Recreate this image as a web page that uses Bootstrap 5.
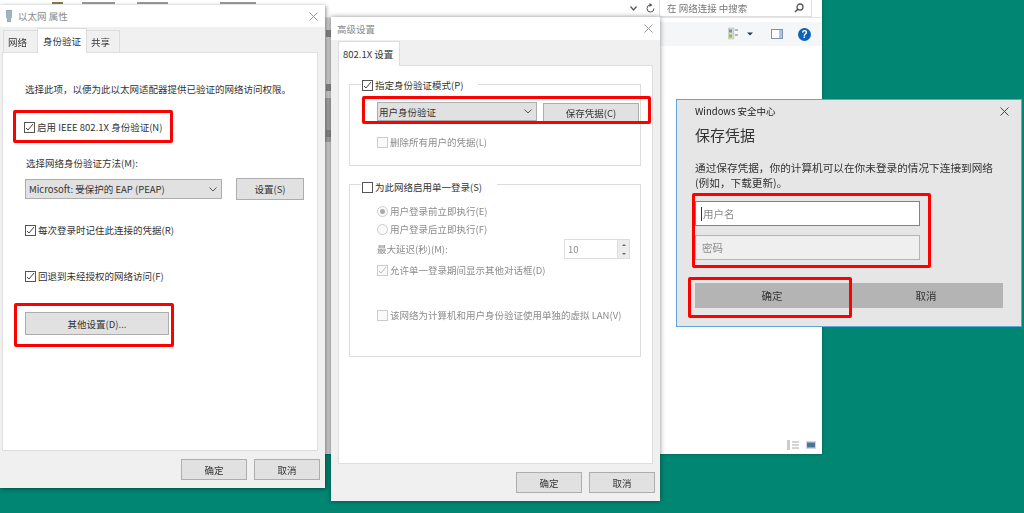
<!DOCTYPE html>
<html lang="zh">
<head>
<meta charset="utf-8">
<title>以太网 属性</title>
<link href="https://cdn.jsdelivr.net/npm/bootstrap@5.3.0/dist/css/bootstrap.min.css" rel="stylesheet">
<style>
html,body{margin:0;height:513px;overflow:hidden}
body{background:#008673;font:9.5px/14px "Noto Sans CJK SC","Liberation Sans",sans-serif;color:#333;position:relative}
.win{position:absolute;background:#f0f0f0;display:flex;flex-direction:column;filter:blur(.35px)}
.dlg-a{left:0;top:5px;width:325px;height:483px;box-shadow:1px 1px 4px rgba(0,0,0,.45)}
.dlg-b{left:331px;top:17px;width:329px;height:484px;box-shadow:0 0 5px rgba(0,0,0,.45)}
.explorer{left:0;top:0;width:822px;height:454px;background:#fff;box-shadow:0 0 3px rgba(0,0,0,.3)}
.titlebar{height:22px;background:#fff;display:flex;align-items:center;color:#8a8a8a;flex:none}
.closex{margin-left:auto;margin-right:7px}
.tabrow{display:flex;align-items:flex-end;height:25px;flex:none}
.wintab{height:22px;padding:0 4px;border:1px solid #dcdcdc;border-bottom:0;background:#f0f0f0;display:flex;align-items:center;color:#333}
.wintab.on{height:25px;background:#fff;position:relative;z-index:1;padding:0 6px;margin-bottom:-1px}
.panel{background:#fff;border:1px solid #dedede;flex:1;position:relative}
.foot{height:37px;display:flex;justify-content:flex-end;align-items:center;gap:7px;flex:none}
.winbtn{background:#e1e1e1;border:1px solid #adadad;display:flex;align-items:center;justify-content:center;color:#333}
.foot .winbtn{width:66px;height:21px}
.rowline{display:flex;align-items:center;gap:2px;white-space:nowrap}
.box{width:11px;height:11px;border:1px solid #555;background:#fff;flex:none;display:flex;align-items:center;justify-content:center}
.box svg{display:block}
.dis{color:#8c8c8c}
.dis .box{border-color:#ccc;background:#fafafa}
.dd{background:#e1e1e1;border:1px solid #adadad;display:flex;align-items:center;padding-left:3px;justify-content:space-between;padding-right:4px;color:#333}
.dd-tight{padding-left:1px}
.red{position:absolute;border:3px solid #f00;border-radius:2px;pointer-events:none;z-index:5;filter:blur(.3px)}
.group{border:1px solid #dcdcdc;position:relative}
.legend{position:absolute;left:11px;top:-7px;background:#fff;padding:0 15px 0 1px;z-index:1}
.ex-top{height:18px;background:#fff;border-bottom:1px solid #e4e4e4;position:relative}
.ex-clip{height:5px;display:flex;align-items:flex-end;padding:0 0 1px 52px}
.ex-clip i{display:block;height:2px;background:#9a9a9a}
.ex-nav{position:absolute;right:167px;top:3px;display:flex;align-items:center;gap:9px}
.search{position:absolute;right:10px;top:0;width:153px;height:17px;border:1px solid #dfdfdf;border-top:0;display:flex;align-items:center;padding:0 7px;color:#777;background:#fff;justify-content:space-between}
.ex-tool{height:24px;background:#f5f6f7;margin-top:4px;display:flex;justify-content:flex-end;align-items:center}
.ex-strip{position:absolute;left:325px;top:18px;width:7px;height:436px;background:#d6d6d6;overflow:hidden}
.ex-strip i{position:absolute;left:1px;width:5px;height:7px;background:#8b8b8b}
.ex-thumb{position:absolute;left:0;top:80px;width:7px;height:44px;background:#ababab}
.dlg-c{left:676px;top:99px;width:346px;height:228px;background:#e6e6e6;border:1px solid #5da5dc;padding:0 0 0 18px;color:#222}
.sec-head{height:22px;display:flex;align-items:center}
.sec-title{font-size:15px;line-height:24px;margin-top:1px;color:#333}
.sec-text{font-size:10.65px;line-height:15px;margin-top:13px;width:320px;color:#333;white-space:nowrap}
.fld{width:225px;height:25px;border:1px solid #b4b4b4;background:#efefef;display:flex;align-items:center;padding-left:6px;color:#8a8a8a;font-size:10.5px}
.fld.act{background:#fff;border-color:#4a90d0;margin-top:11px;margin-bottom:9px;padding-left:5px}
.caret-bar{width:1px;height:14px;background:#333;margin-right:1px}
.sec-btns{display:flex;margin-top:23px}
.sec-btn{width:154px;height:25px;background:#b4b4b4;display:flex;align-items:center;justify-content:center;font-size:10.5px;color:#333}
.spin{width:66px;height:20px;border:1px solid #ddd;background:#fff;display:flex;align-items:center;justify-content:space-between;color:#8c8c8c;padding-left:3px}
.spin-arrows{width:12px;height:18px;background:#ececec;border-left:1px solid #ddd;display:flex;flex-direction:column;align-items:center;justify-content:space-around}
.tri-u{width:0;height:0;border:2px solid transparent;border-top:0;border-bottom:2px solid #666}
.tri-d{width:0;height:0;border:2px solid transparent;border-bottom:0;border-top:2px solid #666}
.radio-o{width:11px;height:11px;border-radius:50%;border:1px solid #ccc;background:#fafafa;flex:none;display:flex;align-items:center;justify-content:center}
.radio-o i{width:5px;height:5px;border-radius:50%;background:#aaa}
</style>
</head>
<body>

<div class="win explorer">
  <div class="ex-top">
    <div class="ex-clip">
      <i style="width:11px;background:#8b7a4a"></i><i style="width:33px;margin-left:19px"></i><i style="width:31px;margin-left:22px"></i><i style="width:36px;margin-left:52px"></i>
    </div>
    <div class="ex-nav">
      <svg width="7" height="5" viewBox="0 0 7 5"><path d="M.5.500L3.500 4 6.500.500" fill="none" stroke="#555" stroke-width="1.200"/></svg>
      <svg width="9" height="10" viewBox="0 0 9 10"><path d="M4.500 2a3.500 3.500 0 1 0 3.500 3.500" fill="none" stroke="#555"/><path d="M3.500 0l3 2-3 2z" fill="#555"/></svg>
    </div>
    <div class="search"><span>在 网络连接 中搜索</span>
      <svg width="10" height="10" viewBox="0 0 10 10"><circle cx="6" cy="4" r="3" fill="none" stroke="#555" stroke-width="1.300"/><path d="M4 6L1 9" stroke="#555" stroke-width="1.600"/></svg></div>
  </div>
  <div class="ex-tool">
    <svg width="26" height="14" viewBox="0 0 26 14"><rect x="0" y="1" width="6" height="11" fill="#d8d8c8" stroke="#bbb" stroke-width=".5"/><rect x="1" y="2.500" width="3" height="3" fill="#5b9bd5"/><rect x="1" y="7.500" width="3" height="3" fill="#8bc34a"/><path d="M7 3h3M7 8h3" stroke="#777"/><path d="M19 5.500h6l-3 3z" fill="#2b3a55"/></svg>
    <svg style="margin-left:17px" width="12" height="10" viewBox="0 0 12 10"><rect x=".5" y=".5" width="11" height="9" fill="#fff" stroke="#7f93ad"/><rect x="8" y="1" width="3" height="8" fill="#a9c6e6"/></svg>
    <svg style="margin-left:15px;margin-right:11px" width="13" height="13" viewBox="0 0 13 13"><circle cx="6.500" cy="6.500" r="6.500" fill="#0c62b8"/><text x="6.500" y="10" font-size="10" font-weight="700" text-anchor="middle" fill="#fff" font-family="Liberation Sans">?</text></svg>
  </div>
  <div class="ex-strip">
    <div class="ex-thumb"></div>
    <i style="top:12px"></i><i style="top:66px"></i><i style="top:112px"></i>
  </div>
  <div class="flex-grow-1"></div>
  <div class="d-flex justify-content-end align-items-center pb-1" style="gap:7px;padding-right:6px">
    <svg width="12" height="10" viewBox="0 0 12 10"><rect width="3" height="10" fill="#ccc"/><path d="M5 2h7M5 5h7M5 8h7" stroke="#aaa"/></svg>
    <svg width="10" height="8" viewBox="0 0 10 8"><rect width="10" height="8" fill="#cfd8e3"/><rect x="1" y="1.500" width="8" height="5" fill="#47789a"/></svg>
  </div>
</div>

<div class="win dlg-a">
  <div class="titlebar" style="padding-left:5px">
    <svg width="8" height="12" viewBox="0 0 8 12"><path d="M1.500 0h5v7l-1 2v3h-3V9l-1-2z" fill="#9fb4bf" stroke="#78909c" stroke-width=".6"/></svg>
    <span style="margin-left:5px">以太网 属性</span>
    <svg class="closex" width="9" height="9" viewBox="0 0 9 9"><path d="M.5.500l8 8M8.500.500l-8 8" stroke="#999"/></svg>
  </div>
  <div class="tabrow" style="padding-left:3px">
    <div class="wintab" style="width:35px">网络</div>
    <div class="wintab on" style="padding:0 5px;margin-left:-1px">身份验证</div>
    <div class="wintab" style="width:34px;margin-left:-1px">共享</div>
  </div>
  <div class="panel" style="margin:0 7px 0 2px">
    <div style="padding:29px 0 0 22px">选择此项，以便为此以太网适配器提供已验证的网络访问权限。</div>
    <div class="rowline" style="margin:24px 0 0 21px"><span class="box"><svg width="9" height="9" viewBox="0 0 9 9"><path d="M1 5l2 2 5-6" fill="none" stroke="#444"/></svg></span>启用 IEEE 802.1X 身份验证(N)</div>
    <div style="margin:22px 0 0 23px">选择网络身份验证方法(M):</div>
    <div class="d-flex" style="margin:9px 0 0 22px;gap:14px">
      <div class="dd" style="width:197px;height:20px">Microsoft: 受保护的 EAP (PEAP)<svg width="8" height="5" viewBox="0 0 8 5"><path d="M.5.500L4 4 7.500.500" fill="none" stroke="#555"/></svg></div>
      <div class="winbtn" style="width:68px;height:22px;margin-top:-1px">设置(S)</div>
    </div>
    <div class="rowline" style="margin:23px 0 0 22px"><span class="box"><svg width="9" height="9" viewBox="0 0 9 9"><path d="M1 5l2 2 5-6" fill="none" stroke="#444"/></svg></span>每次登录时记住此连接的凭据(R)</div>
    <div class="rowline" style="margin:32px 0 0 22px"><span class="box"><svg width="9" height="9" viewBox="0 0 9 9"><path d="M1 5l2 2 5-6" fill="none" stroke="#444"/></svg></span>回退到未经授权的网络访问(F)</div>
    <div class="winbtn" style="width:144px;height:23px;margin:29px 0 0 22px">其他设置(D)...</div>
  </div>
  <div class="foot" style="padding-right:5px"><div class="winbtn">确定</div><div class="winbtn">取消</div></div>
</div>

<div class="win dlg-b">
  <div class="titlebar" style="padding-left:6px;height:23px">高级设置
    <svg class="closex" width="9" height="9" viewBox="0 0 9 9"><path d="M.5.500l8 8M8.500.500l-8 8" stroke="#999"/></svg>
  </div>
  <div class="tabrow" style="padding-left:7px"><div class="wintab on" style="height:25px;padding:0 4px;width:62px">802.1X 设置</div></div>
  <div class="panel" style="margin:0 7px 0 7px">
    <div class="group" style="margin:18px 11px 0 10px;height:82px">
      <div class="legend rowline"><span class="box"><svg width="9" height="9" viewBox="0 0 9 9"><path d="M1 5l2 2 5-6" fill="none" stroke="#444"/></svg></span>指定身份验证模式(P)</div>
      <div class="d-flex" style="padding:17px 0 0 27px;gap:6px">
        <div class="dd dd-tight" style="width:160px;height:19px">用户身份验证<svg width="8" height="5" viewBox="0 0 8 5"><path d="M.5.500L4 4 7.500.500" fill="none" stroke="#555"/></svg></div>
        <div class="winbtn" style="width:96px;height:19px;margin-top:1px">保存凭据(C)</div>
      </div>
      <div class="rowline dis" style="margin:13px 0 0 27px"><span class="box"></span>删除所有用户的凭据(L)</div>
    </div>
    <div class="group" style="margin:18px 11px 0 10px;height:173px">
      <div class="legend rowline" style="top:-5px"><span class="box"></span>为此网络启用单一登录(S)</div>
      <div class="rowline dis" style="padding:19px 0 0 27px"><span class="radio-o"><i></i></span>用户登录前立即执行(E)</div>
      <div class="rowline dis" style="margin:4px 0 0 27px"><span class="radio-o"></span>用户登录后立即执行(F)</div>
      <div class="d-flex dis align-items-center" style="margin:3px 0 0 27px">
        <span>最大延迟(秒)(M):</span>
        <div class="spin" style="margin-left:auto;margin-right:10px">10<div class="spin-arrows"><i class="tri-u"></i><i class="tri-d"></i></div></div>
      </div>
      <div class="rowline dis" style="margin:4px 0 0 27px"><span class="box"><svg width="9" height="9" viewBox="0 0 9 9"><path d="M1 5l2 2 5-6" fill="none" stroke="#bbb"/></svg></span>允许单一登录期间显示其他对话框(D)</div>
      <div class="rowline dis" style="margin:31px 0 0 27px"><span class="box"></span>该网络为计算机和用户身份验证使用单独的虚拟 LAN(V)</div>
    </div>
  </div>
  <div class="foot" style="padding-right:5px"><div class="winbtn">确定</div><div class="winbtn">取消</div></div>
</div>

<div class="win dlg-c">
  <div class="sec-head">Windows 安全中心
    <svg class="ms-auto" style="margin-right:12px" width="9" height="9" viewBox="0 0 9 9"><path d="M.5.500l8 8M8.500.500l-8 8" stroke="#444"/></svg>
  </div>
  <div class="sec-title">保存凭据</div>
  <div class="sec-text">通过保存凭据，你的计算机可以在你未登录的情况下连接到网络<br>(例如，下载更新)。</div>
  <div class="fld act"><span class="caret-bar"></span>用户名</div>
  <div class="fld">密码</div>
  <div class="sec-btns"><div class="sec-btn">确定</div><div class="sec-btn">取消</div></div>
</div>

<div class="red" style="left:13px;top:110px;width:160px;height:33px"></div>
<div class="red" style="left:14px;top:303px;width:160px;height:44px"></div>
<div class="red" style="left:362px;top:96px;width:289px;height:28px"></div>
<div class="red" style="left:692px;top:193px;width:239px;height:75px"></div>
<div class="red" style="left:688px;top:277px;width:164px;height:41px"></div>
</body>
</html>
